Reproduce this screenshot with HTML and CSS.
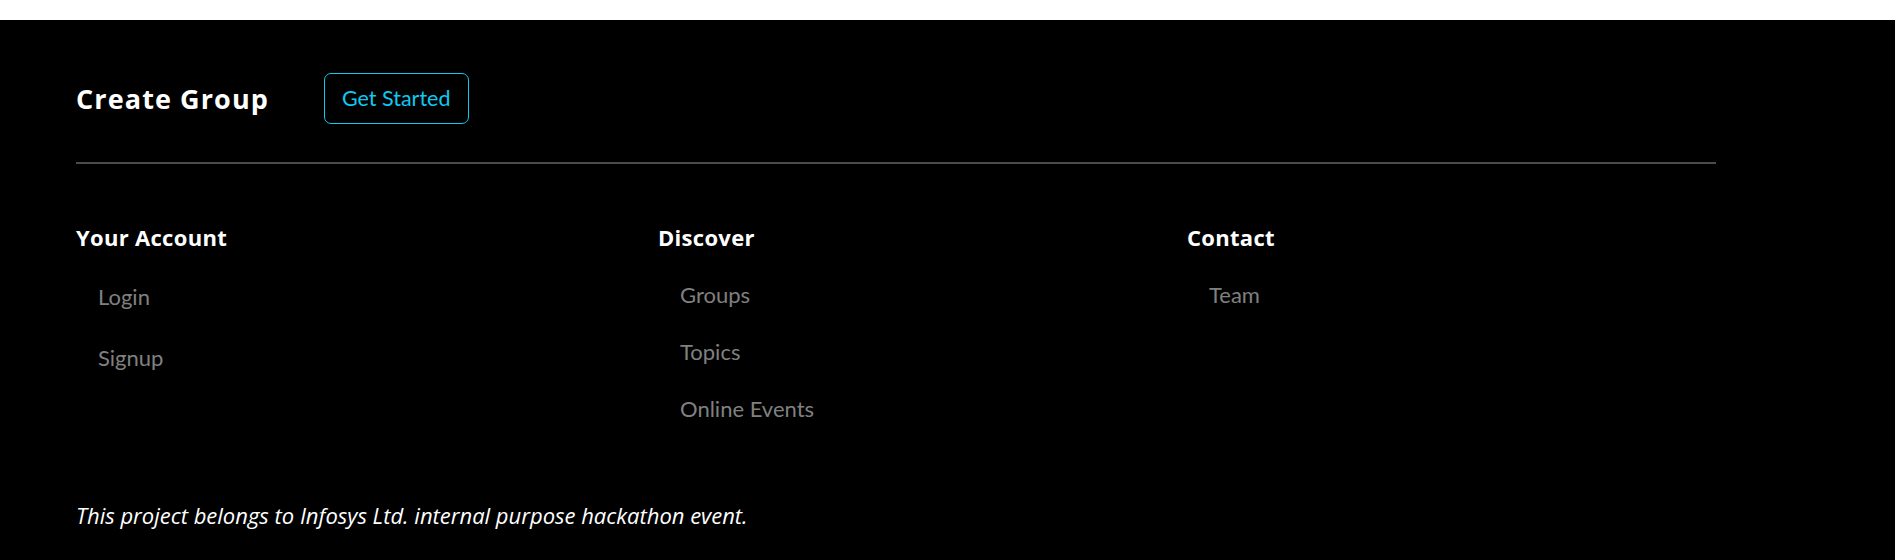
FILE: index.html
```html
<!DOCTYPE html>
<html lang="en">
<head>
<meta charset="utf-8">
<title>Footer</title>
<link rel="stylesheet" href="styles.css">
</head>
<body>
<footer class="site-footer">
  <div class="footer-inner">
    <div class="cta-row">
      <h2 class="cta-title">Create Group</h2>
      <a class="btn-outline" href="#">Get Started</a>
    </div>
    <hr class="divider">
    <div class="link-grid">
      <div class="link-col">
        <h3 class="col-title">Your Account</h3>
        <ul class="link-list list-wide">
          <li><a href="#">Login</a></li>
          <li><a href="#">Signup</a></li>
        </ul>
      </div>
      <div class="link-col">
        <h3 class="col-title">Discover</h3>
        <ul class="link-list">
          <li><a href="#">Groups</a></li>
          <li><a href="#">Topics</a></li>
          <li><a href="#">Online Events</a></li>
        </ul>
      </div>
      <div class="link-col">
        <h3 class="col-title">Contact</h3>
        <ul class="link-list">
          <li><a href="#">Team</a></li>
        </ul>
      </div>
    </div>
    <p class="footer-note">This project belongs to Infosys Ltd. internal purpose hackathon event.</p>
  </div>
</footer>
</body>
</html>
```
FILE: styles.css
```css
* { box-sizing: border-box; }

html, body {
  margin: 0;
  padding: 0;
  background: #ffffff;
}

body {
  font-family: "Lato", "Noto Sans", sans-serif;
}

.site-footer {
  margin-top: 20px;
  background: #000000;
  color: #ffffff;
  padding: 53px 0 60px 76px;
  min-height: 540px;
}

.footer-inner {
  width: 1640px;
}

.cta-row {
  display: flex;
  align-items: center;
  gap: 55px;
  height: 51px;
}

.cta-title {
  margin: 0;
  font-family: "Open Sans", sans-serif;
  font-weight: 700;
  font-size: 27px;
  letter-spacing: 1.1px;
  line-height: 34px;
  color: #ffffff;
}

.btn-outline {
  display: inline-block;
  height: 51px;
  line-height: 49px;
  padding: 0 17px;
  border: 1px solid #0dcaf0;
  border-radius: 7px;
  color: #0dcaf0;
  font-family: "Lato", sans-serif;
  font-size: 21.5px;
  text-decoration: none;
}

.divider {
  margin: 38px 0 0 0;
  border: 0;
  height: 2px;
  background: #4b4b4b;
}

.link-grid {
  display: grid;
  grid-template-columns: 582px 529px 1fr;
  margin-top: 60px;
}

.col-title {
  margin: 0;
  font-family: "Open Sans", sans-serif;
  font-weight: 700;
  font-size: 22px;
  letter-spacing: 0.3px;
  line-height: 26px;
  color: #ffffff;
}

.link-list {
  list-style: none;
  margin: 32px 0 0 0;
  padding: 0 0 0 22px;
  display: flex;
  flex-direction: column;
  gap: 31px;
}

.link-list.list-wide {
  margin-top: 34px;
  gap: 35px;
}

.link-list a {
  display: block;
  font-size: 22px;
  line-height: 26px;
  color: #808080;
  text-decoration: none;
}

.footer-note {
  margin: 80px 0 0 0;
  font-family: "Open Sans", sans-serif;
  font-style: italic;
  font-size: 22px;
  line-height: 26px;
  color: #ffffff;
}
```
